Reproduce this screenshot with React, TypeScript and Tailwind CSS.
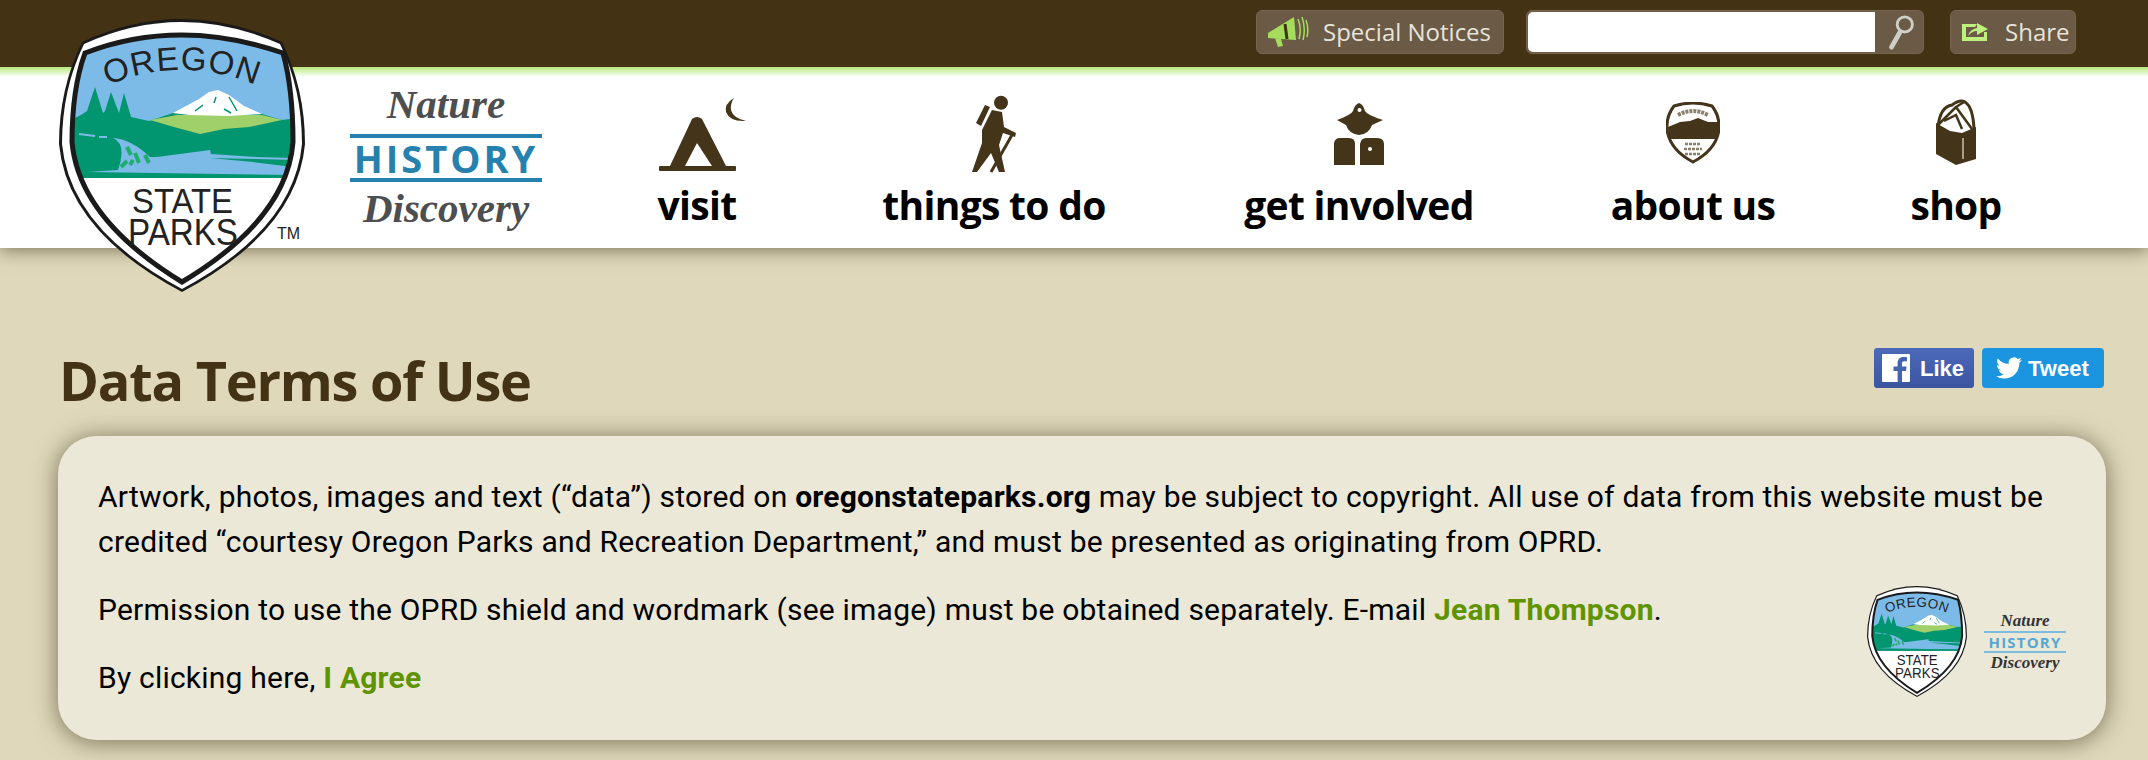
import React from "react";

const Shield = ({ className }: { className?: string }) => (
  <svg viewBox="0 0 246 273" className={className}>
    <defs>
      <clipPath id="in">
        <path d="M26 34 Q120 -2 224 34 Q234 70 234 123 Q228 200 123 263 Q20 200 13 123 Q13 70 26 34Z" />
      </clipPath>
    </defs>
    <path d="M23 23 Q122 -23 223 23 Q246 70 246 125 Q238 212 123 273 Q8 212 0 125 Q0 70 23 23Z" fill="#1a1a1a" />
    <path d="M25 25 Q122 -19 221 25 Q243 70 243 125 Q235 210 123 270 Q11 210 3 125 Q3 70 25 25Z" fill="#fff" />
    <path d="M26 34 Q120 -2 224 34 Q234 70 234 123 Q228 200 123 263 Q20 200 13 123 Q13 70 26 34Z" fill="#fff" />
    <g clipPath="url(#in)">
      <rect x="0" y="0" width="246" height="159" fill="#7cbbe8" />
      <path d="M0 98 L14 100 L22 96 L28 92 L36 68 L44 94 L46 92 L52 73 L60 94 L65 74 L72 98 L90 102 L114 94 L160 96 L203 95 L223 101 L246 98 L246 159 L0 159Z" fill="#029670" />
      <path d="M91 101 L118 96 L203 96 L223 101 L190 108 L165 110 L141 115 L115 108Z" fill="#a0d06a" />
      <path d="M114 94 L140 80 L150 73 L159 71 L170 76 L185 87 L203 95 L170 97 L130 96Z" fill="#fff" />
      <path d="M136 92 L144 86 M155 84 L157 78 M170 78 L178 92 M165 90 L172 94" stroke="#029670" strokeWidth="1.5" fill="none" />
      <path d="M20 115 L36 117 M40 118 L48 118" stroke="#7cbbe8" strokeWidth="2" />
      <path d="M54 119 Q72 120 91 138 L98 138 L151 131 L152 135 L198 138 L234 139 L234 141 L198 140 L151 139 L194 143 L234 148 L234 156 L29 153 L59 151 Q68 125 54 119Z" fill="#7cbbe8" />
      <path d="M68 128 L72 136 M62 148 L68 142 M76 134 L80 144 M86 136 L90 144 M71 146 L74 141" stroke="#1fae6e" strokeWidth="4" />
      <rect x="0" y="156" width="246" height="3" fill="#029670" />
    </g>
    <path d="M26 34 Q120 -2 224 34 Q234 70 234 123 Q228 200 123 263 Q20 200 13 123 Q13 70 26 34Z" fill="none" stroke="#1a1a1a" strokeWidth="5" />
    <path id="arc" d="M30 75 Q123 27 216 75" fill="none" />
    <text fontFamily="'Liberation Sans',sans-serif" fontSize="33" letterSpacing="1" fill="#222">
      <textPath href="#arc" startOffset="50%" textAnchor="middle">OREGON</textPath>
    </text>
    <text x="123.5" y="194" textAnchor="middle" fontFamily="'Liberation Sans',sans-serif" fontSize="35" fill="#222" textLength="101" lengthAdjust="spacingAndGlyphs">STATE</text>
    <text x="124" y="226" textAnchor="middle" fontFamily="'Liberation Sans',sans-serif" fontSize="37" fill="#222" textLength="110" lengthAdjust="spacingAndGlyphs">PARKS</text>
  </svg>
);

const Wordmark = () => (
  <div className="flex w-[192px] flex-col items-center">
    <span className="font-['Liberation_Serif',serif] text-[41px] leading-[42px] font-bold text-[#4d4e50] italic">Nature</span>
    <span className="mt-[9px] w-full border-y-4 border-[#2681ae] text-center font-['Open_Sans',sans-serif] text-[38px] leading-[40px] font-bold tracking-[3px] whitespace-nowrap text-[#2681ae]">HISTORY</span>
    <span className="mt-[4px] font-['Liberation_Serif',serif] text-[41px] leading-[44px] font-bold text-[#4d4e50] italic">Discovery</span>
  </div>
);

const Tent = () => (
  <svg viewBox="0 0 88 74" className="ml-[12px] h-[74px] w-[88px]" fill="#44341a">
    <rect x="0" y="68" width="77" height="5" rx="1" />
    <path d="M11 68 L33 21 Q38 17 43 21 L67 68Z" />
    <path d="M26 68 L38 45 L53 68Z" fill="#fff" />
    <path d="M75 0 Q65 6 67 14 Q71 24 87 23 Q74 20 72 12 Q71 6 75 0Z" />
  </svg>
);
const Hiker = () => (
  <svg viewBox="0 0 46 79" className="-mb-[2px] h-[79px] w-[46px]" fill="#44341a">
    <circle cx="30" cy="7.7" r="7" />
    <path d="M14 10 L19 12 L10 31 L5 28Z" />
    <path d="M21 15 L31 17 L33 32 L45 38 L44 42 L32 38 L28 50 L34 77 L28 77 L20 58 L6 77 L1 77 L11 48 L11 35Z" />
    <path d="M41 40 L20 77" stroke="#44341a" strokeWidth="3" fill="none" />
  </svg>
);
const Scout = () => (
  <svg viewBox="0 0 50 62" className="mb-[7px] h-[62px] w-[50px]" fill="#44341a">
    <path d="M25 0 Q29 1 31 8 Q33 12 49 17 L38 22 Q35 31 25 32 Q15 31 12 22 L3 17 Q17 12 19 8 Q21 1 25 0Z" />
    <circle cx="25.5" cy="7" r="2" fill="#fff" />
    <path d="M0 62 L0 40 Q1 35 6 35 L15 35 Q21 35 21 41 L21 62Z" />
    <path d="M26 62 L26 41 Q27 35 32 35 L43 35 Q50 35 50 41 L50 62Z" />
    <circle cx="36" cy="46" r="2" fill="#fff" />
  </svg>
);
const Badge = () => (
  <svg viewBox="0 0 54 62" className="mb-[8px] h-[62px] w-[54px]">
    <path d="M8 4 Q27 -2 46 4 Q54 14 53 28 Q50 48 27 60 Q4 48 1 28 Q0 14 8 4Z" fill="#fff" stroke="#44341a" strokeWidth="3" />
    <path d="M2 25 L14 20 L24 19 L32 16 L42 20 L52 20 L52 37 L3 37Z" fill="#44341a" />
    <path d="M12 13 Q27 5 42 13" fill="none" stroke="#8a7f6a" strokeWidth="4" strokeDasharray="3 1" />
    <path d="M19 42 H35 M18 47 H36 M19 52 H35" stroke="#8a7f6a" strokeWidth="2.5" strokeDasharray="3 1" />
  </svg>
);
const Bag = () => (
  <svg viewBox="0 0 40 67" className="mb-[6px] h-[67px] w-[40px]" fill="none">
    <path d="M2 28 Q4 8 16 6 Q24 0 29 3 Q37 8 38 30" stroke="#44341a" strokeWidth="3" />
    <path d="M2 26 L20 8 M28 3 L20 8 L36 30 M8 22 L20 16 L26 30" stroke="#44341a" strokeWidth="2.5" />
    <path d="M0 24 L14 32 L26 34 L40 28 L40 60 L20 66 L0 55Z" fill="#44341a" />
    <path d="M27 39 V60" stroke="#c8c0ae" strokeWidth="1.5" />
  </svg>
);

const NavItem = ({ icon, label, className }: { icon: React.ReactNode; label: string; className: string }) => (
  <a className={`flex flex-col items-center ${className}`}>
    <div className="flex h-[86px] items-end justify-center">{icon}</div>
    <span className="mt-[10px] font-['Open_Sans',sans-serif] text-[39px] leading-[46px] font-bold tracking-[-0.7px] whitespace-nowrap text-black">{label}</span>
  </a>
);

const Btn = ({ children, className }: { children: React.ReactNode; className?: string }) => (
  <div className={`flex h-[44px] items-center rounded-[6px] border border-[#77664f] bg-[#6a5a46] ${className ?? ""}`}>{children}</div>
);

export default function App() {
  return (
    <div className="h-[760px] w-full overflow-hidden bg-[#dfd8bb] font-['Roboto',sans-serif]">
      <header className="relative z-10 shadow-[0_3px_16px_rgba(60,50,20,0.55)]">
        <div className="flex h-[67px] items-start justify-end bg-[#433214] pt-[10px] pr-[72px] font-['Open_Sans',sans-serif] text-[#e8e4da]">
          <Btn className="w-[248px] pl-[10px]">
            <svg viewBox="0 0 42 32" className="h-[32px] w-[42px]">
              <path d="M1 17 L27 1 L29 24 L1 22Z" fill="#a4dc5c" />
              <path d="M8 22 L11 31 L16 30 L14 23Z" fill="#a4dc5c" />
              <path d="M18 8 L20 23" stroke="#433214" strokeWidth="3" />
              <path d="M31 3 Q35 12 32 23 M35 1 Q39 12 36 24 M39 4 Q42 12 40 21" fill="none" stroke="#a4dc5c" strokeWidth="1.5" />
            </svg>
            <span className="ml-[14px] w-[168px] text-center text-[24px] leading-[30px] whitespace-nowrap">Special Notices</span>
          </Btn>
          <Btn className="ml-[22px] w-[398px] p-[1px] pr-0">
            <div className="h-full w-[347px] rounded-l-[5px] bg-white" />
            <svg viewBox="0 0 30 40" className="ml-[11px] h-[38px] w-[30px]" fill="none">
              <circle cx="19" cy="12" r="8" stroke="#cfcfc8" strokeWidth="3" />
              <path d="M14 20 L5 36" stroke="#cfcfc8" strokeWidth="5" strokeLinecap="round" />
            </svg>
          </Btn>
          <Btn className="ml-[26px] w-[126px] pl-[11px]">
            <svg viewBox="0 0 26 20" className="h-[20px] w-[26px]" fill="#bdf07d">
              <path d="M0 2H15L13 5H4V15H22V10H25V19H0Z" />
              <path d="M6 14 Q8 7 15 6 V1 L26 7 L15 13 V9 Q10 9 6 14Z" />
            </svg>
            <span className="ml-[17px] text-[24px] leading-[30px]">Share</span>
          </Btn>
        </div>
        <div className="h-[10px] bg-gradient-to-b from-[#b8e878] to-white" />
        <div className="flex h-[171px] items-start bg-white">
          <div className="ml-[350px] pt-[6px]"><Wordmark /></div>
          <div className="mt-[9px] flex items-start">
            <NavItem className="ml-[105px] w-[100px]" icon={<Tent />} label="visit" />
            <NavItem className="ml-[127px] w-[240px]" icon={<Hiker />} label="things to do" />
            <NavItem className="ml-[125px] w-[240px]" icon={<Scout />} label="get involved" />
            <NavItem className="ml-[124px] w-[180px]" icon={<Badge />} label="about us" />
            <NavItem className="ml-[123px] w-[100px]" icon={<Bag />} label="shop" />
          </div>
        </div>
      </header>
      <div className="absolute top-[19px] left-[59px] z-20">
        <Shield className="h-[273px] w-[246px]" />
        <span className="absolute top-[207px] left-[218px] font-['Liberation_Sans',sans-serif] text-[16px] leading-[16px] text-[#222]">TM</span>
      </div>
      <main className="pr-[42px] pl-[58px]">
        <div className="flex items-start justify-between pt-[100px] pr-[2px]">
          <h1 className="pl-[1px] font-['Open_Sans',sans-serif] text-[54px] leading-[64px] font-bold tracking-[-1.2px] text-[#433214]">Data Terms of Use</h1>
          <div className="flex gap-[8px] font-['Liberation_Sans',sans-serif] text-[22px] font-bold text-white">
            <a className="flex h-[40px] w-[100px] items-center rounded-[3px] bg-gradient-to-b from-[#4c69ba] to-[#3b55a0] pl-[8px]">
              <svg viewBox="0 0 28 28" className="h-[28px] w-[28px]">
                <rect width="28" height="28" rx="1" fill="#fff" />
                <path d="M20 28 V17 h4 l.6-4.6 H20 V9.5 c0-1.3.4-2.2 2.3-2.2 H25 V3.2 C24.5 3.1 23 3 21.5 3 18 3 15.6 5.1 15.6 9 v3.4 H11.5 V17 H15.6 V28Z" fill="#4564b0" />
              </svg>
              <span className="ml-[10px]">Like</span>
            </a>
            <a className="flex h-[40px] w-[122px] items-center rounded-[4px] bg-[#1b95e0] pl-[14px]">
              <svg viewBox="0 0 24 24" className="h-[26px] w-[26px]" fill="#fff">
                <path d="M23.95 4.57a10 10 0 0 1-2.82.77 4.96 4.96 0 0 0 2.16-2.72c-.95.55-2 .95-3.12 1.18a4.92 4.92 0 0 0-8.38 4.48A14 14 0 0 1 1.64 3.16a4.82 4.82 0 0 0-.67 2.48c0 1.71.87 3.21 2.19 4.1a4.9 4.9 0 0 1-2.23-.62v.06a4.92 4.92 0 0 0 3.95 4.83 5 5 0 0 1-2.21.08 4.94 4.94 0 0 0 4.6 3.42A9.87 9.87 0 0 1 0 19.54a14 14 0 0 0 7.56 2.21c9.05 0 14-7.5 14-13.98 0-.21 0-.42-.02-.63a9.94 9.94 0 0 0 2.46-2.55z" />
              </svg>
              <span className="ml-[6px]">Tweet</span>
            </a>
          </div>
        </div>
        <section className="relative mt-[24px] h-[304px] rounded-[38px] bg-[#ebe8d7] pt-[38px] pr-[40px] pl-[40px] text-[30px] leading-[45px] tracking-[0.22px] text-black shadow-[0_2px_24px_rgba(50,40,15,0.6)]">
          <p>Artwork, photos, images and text (“data”) stored on <b>oregonstateparks.org</b> may be subject to copyright. All use of data from this website must be credited “courtesy Oregon Parks and Recreation Department,” and must be presented as originating from OPRD.</p>
          <p className="mt-[23px]">Permission to use the OPRD shield and wordmark (see image) must be obtained separately. E-mail <b className="text-[#5f9400]">Jean Thompson</b>.</p>
          <p className="mt-[23px]">By clicking here, <b className="text-[#5f9400]">I Agree</b></p>
          <div className="absolute top-[150px] right-[40px] flex items-center">
            <Shield className="h-[111px] w-[100px]" />
            <div className="ml-[17px] flex w-[82px] flex-col items-center font-['Liberation_Serif',serif] text-[17px] leading-[20px] font-bold tracking-normal text-[#333] italic">
              <span>Nature</span>
              <span className="w-full border-y-2 border-[#7cbcdf] text-center font-['Open_Sans',sans-serif] text-[15px] leading-[18px] font-bold tracking-[1.2px] whitespace-nowrap text-[#56a8d4] not-italic">HISTORY</span>
              <span>Discovery</span>
            </div>
          </div>
        </section>
      </main>
    </div>
  );
}
